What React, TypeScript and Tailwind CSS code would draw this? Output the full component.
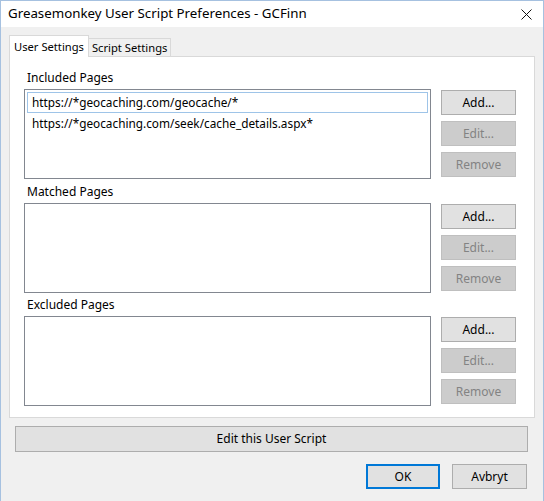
import type { ReactNode } from 'react';

const font = { fontFamily: '"Noto Sans", "Segoe UI", sans-serif' };

function WinButton({
  children,
  disabled,
  className = '',
}: {
  children: ReactNode;
  disabled?: boolean;
  className?: string;
}) {
  return (
    <button
      type="button"
      disabled={disabled}
      className={
        'flex items-center justify-center border text-[12px] leading-none ' +
        (disabled
          ? 'border-[#bfbfbf] bg-[#cccccc] text-[#838383] '
          : 'border-[#adadad] bg-[#e1e1e1] text-black ') +
        className
      }
    >
      {children}
    </button>
  );
}

function PageSection({
  label,
  items = [],
  className = '',
}: {
  label: string;
  items?: string[];
  className?: string;
}) {
  return (
    <div className={'flex flex-col ' + className}>
      <div className="flex h-[23px] items-center pl-[3px] text-[12px] leading-none">{label}</div>
      <div className="flex gap-[10px]">
        <div className="h-[90px] w-[407px] border border-[#828790] bg-white p-[2px]">
          {items.map((item, i) => (
            <div
              key={item}
              className={
                'flex h-[21px] items-center pl-[4px] text-[11.8px] leading-none ' +
                (i === 0 ? 'border border-[#9ec4e8]' : 'border border-transparent')
              }
            >
              {item}
            </div>
          ))}
        </div>
        <div className="flex flex-col gap-[6px] pt-[1px]">
          <WinButton className="h-[25px] w-[75px]">Add...</WinButton>
          <WinButton disabled className="h-[25px] w-[75px]">
            Edit...
          </WinButton>
          <WinButton disabled className="h-[25px] w-[75px]">
            Remove
          </WinButton>
        </div>
      </div>
    </div>
  );
}

export default function App() {
  return (
    <div
      style={font}
      className="flex h-[501px] w-[544px] flex-col border-x border-t border-[#a6c1e0] bg-[#f0f0f0] text-black"
    >
      <div className="flex h-[26px] items-center justify-between bg-white pl-[7px] pr-[11px]">
        <span className="text-[13.3px] leading-none">Greasemonkey User Script Preferences - GCFinn</span>
        <svg width="11" height="11" viewBox="0 0 11 11" className="mt-[1px]">
          <path d="M0.5 0.5 L10.5 10.5 M10.5 0.5 L0.5 10.5" stroke="#111" strokeWidth="1" />
        </svg>
      </div>

      <div className="flex flex-col px-[8px] pt-[8px]">
        <div className="flex items-end">
          <div className="relative z-10 -mb-px flex h-[22px] items-center border border-b-0 border-[#d9d9d9] bg-white px-[4px] text-[11.2px] leading-none">
            User Settings
          </div>
          <div className="flex h-[18px] items-center border border-b-0 border-l-0 border-[#d9d9d9] bg-[#f0f0f0] px-[3px] text-[11.2px] leading-none">
            Script Settings
          </div>
        </div>
        <div className="flex h-[362px] w-[526px] flex-col border border-[#d9d9d9] bg-white pl-[14px] pt-[9px]">
          <PageSection
            label="Included Pages"
            items={['https://*geocaching.com/geocache/*', 'https://*geocaching.com/seek/cache_details.aspx*']}
          />
          <PageSection label="Matched Pages" className="mt-[1px]" />
          <PageSection label="Excluded Pages" />
        </div>
      </div>

      <div className="flex flex-col px-[14px] pt-[8px]">
        <WinButton className="h-[26px] w-[513px]">Edit this User Script</WinButton>
        <div className="mt-[12px] flex justify-end gap-[12px] pr-[2px]">
          <button
            type="button"
            className="flex h-[25px] w-[74px] items-center justify-center border-2 border-[#0078d7] bg-[#e1e1e1] text-[12px] leading-none"
          >
            OK
          </button>
          <WinButton className="h-[25px] w-[75px]">Avbryt</WinButton>
        </div>
      </div>
    </div>
  );
}
